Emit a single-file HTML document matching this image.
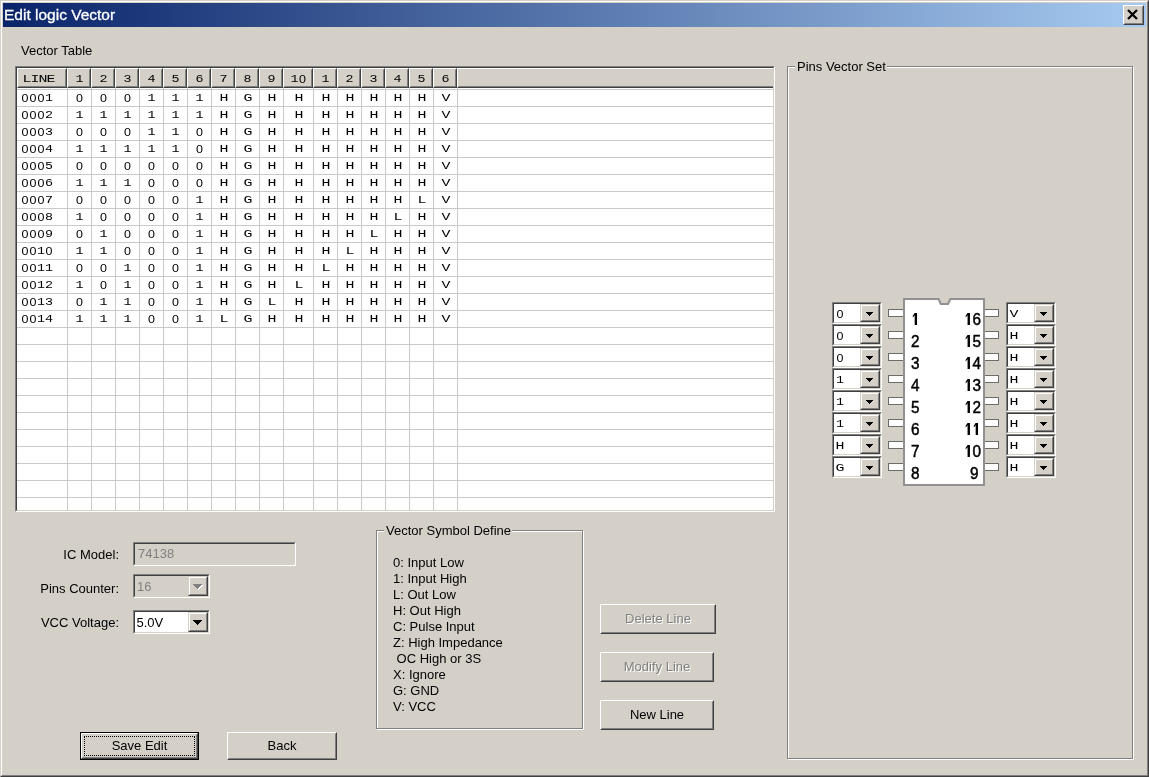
<!DOCTYPE html>
<html><head><meta charset="utf-8"><title>Edit logic Vector</title>
<style>
html,body{margin:0;padding:0}
body{will-change:transform;width:1149px;height:777px;overflow:hidden;background:#d4d0c8;position:relative;
 font-family:"Liberation Sans",sans-serif;font-size:13px;color:#000;line-height:16px}
div,span{position:absolute;box-sizing:border-box;white-space:nowrap}
.t{font-family:"Liberation Sans",sans-serif}
.m{font-family:"Liberation Mono",monospace;font-size:13.33px}
/* window frame */
#w1{left:0;top:0;width:1149px;height:777px;border:1px solid;border-color:#d4d0c8 #404040 #404040 #d4d0c8}
#w2{left:1px;top:1px;width:1147px;height:775px;border:1px solid;border-color:#fff #808080 #808080 #fff}
#title{left:3px;top:3px;width:1143px;height:24px;background:linear-gradient(to right,#0a246a 0%,#a6caf0 100%)}
#title span{left:1px;top:0;height:24px;line-height:24px;color:#fff;font-size:15.5px;-webkit-text-stroke:.3px #fff}
#close{left:1123px;top:5px;width:21px;height:20px;background:#d4d0c8;border:1px solid;border-color:#fff #404040 #404040 #fff}
#close i{position:absolute;left:0;top:0;right:0;bottom:0;border:1px solid;border-color:#d4d0c8 #808080 #808080 #d4d0c8}
/* table */
#tb{left:15px;top:66px;width:760px;height:446px;border:1px solid;border-color:#808080 #fff #fff #808080}
#tb2{left:16px;top:67px;width:758px;height:444px;border:1px solid;border-color:#404040 #d4d0c8 #d4d0c8 #404040;background:#fff}
.h{top:68px;height:20px;background:#d4d0c8;border:1px solid;border-color:#fff #404040 #404040 #fff;text-align:center;line-height:15px}
.h i{position:absolute;left:0;top:0;right:0;bottom:0;border:1px solid;border-color:#d4d0c8 #808080 #808080 #d4d0c8}
.h b{position:absolute;left:0;right:0;top:1px;font-weight:normal;font-style:normal}
.vl{top:88px;width:1px;height:422px;background:#cbc9c5}
.hl{left:17px;width:756px;height:1px;background:#cbc9c5}
.g{width:10px;height:16px;line-height:16px;text-align:center;transform:scale(1.12,.88)}
.w{line-height:0;font-size:0}
.w i{display:inline-block;vertical-align:top;width:8px;height:16px;line-height:16px;text-align:center;font-style:normal;transform:scale(1.12,.88)}
.w i.m{font-size:13.33px}
.w i.d,.d{transform:scale(1,.88)}
.z{font-family:"Liberation Sans",sans-serif;font-size:12.5px}
.sk{border:1px solid;border-color:#808080 #fff #fff #808080}
.sk2{border:1px solid;border-color:#404040 #d4d0c8 #d4d0c8 #404040}
.rb{background:#d4d0c8;border:1px solid;border-color:#d4d0c8 #404040 #404040 #d4d0c8}
.rb i{position:absolute;left:0;top:0;right:0;bottom:0;border:1px solid;border-color:#fff #808080 #808080 #fff}
.bt{background:#d4d0c8;border:1px solid;border-color:#fff #404040 #404040 #fff}
.bt i{position:absolute;left:0;top:0;right:0;bottom:0;border:1px solid;border-color:#d4d0c8 #808080 #808080 #d4d0c8}
.bl{text-align:center}
.rl{text-align:right}
.pin{height:8px;background:#fff;border:1px solid #6c6c6a}
.pn svg{position:static;vertical-align:baseline}
.pn{font-size:17px;line-height:16px;transform:scaleX(.9);-webkit-text-stroke:.5px #000}
</style></head>
<body>
<div id="w1"></div><div id="w2"></div>
<div id="title"><span>Edit logic Vector</span></div>
<div id="close"><i></i><svg style="position:absolute;left:3px;top:3px" width="12" height="12" viewBox="0 0 12 12"><path d="M1 1 L10 10 M10 1 L1 10" stroke="#000" stroke-width="2.2" fill="none"/></svg></div>
<span style="left:21px;top:43px">Vector Table</span>
<div id="tb"></div><div id="tb2"></div>
<div class="h" style="left:17px;width:50px"><i></i></div>
<div class="h" style="left:67px;width:24px"><i></i></div>
<div class="h" style="left:91px;width:24px"><i></i></div>
<div class="h" style="left:115px;width:24px"><i></i></div>
<div class="h" style="left:139px;width:24px"><i></i></div>
<div class="h" style="left:163px;width:24px"><i></i></div>
<div class="h" style="left:187px;width:24px"><i></i></div>
<div class="h" style="left:211px;width:24px"><i></i></div>
<div class="h" style="left:235px;width:24px"><i></i></div>
<div class="h" style="left:259px;width:24px"><i></i></div>
<div class="h" style="left:283px;width:30px"><i></i></div>
<div class="h" style="left:313px;width:24px"><i></i></div>
<div class="h" style="left:337px;width:24px"><i></i></div>
<div class="h" style="left:361px;width:24px"><i></i></div>
<div class="h" style="left:385px;width:24px"><i></i></div>
<div class="h" style="left:409px;width:24px"><i></i></div>
<div class="h" style="left:433px;width:24px"><i></i></div>
<div style="left:457px;top:68px;width:316px;height:20px;overflow:hidden"><div class="h" style="left:0;top:0;width:330px"><i></i></div></div>
<span class="w" style="left:23px;top:70.66px"><i class="m">L</i><i class="m">I</i><i class="m">N</i><i class="m">E</i></span>
<span class="g m d" style="left:74.5px;top:70.66px">1</span>
<span class="g m d" style="left:98.5px;top:70.66px">2</span>
<span class="g m d" style="left:122.5px;top:70.66px">3</span>
<span class="g m d" style="left:146.5px;top:70.66px">4</span>
<span class="g m d" style="left:170.5px;top:70.66px">5</span>
<span class="g m d" style="left:194.5px;top:70.66px">6</span>
<span class="g m d" style="left:218.5px;top:70.66px">7</span>
<span class="g m d" style="left:242.5px;top:70.66px">8</span>
<span class="g m d" style="left:266.5px;top:70.66px">9</span>
<span class="w" style="left:290.5px;top:70.66px"><i class="m d">1</i><i class="z d">0</i></span>
<span class="g m d" style="left:320.5px;top:70.66px">1</span>
<span class="g m d" style="left:344.5px;top:70.66px">2</span>
<span class="g m d" style="left:368.5px;top:70.66px">3</span>
<span class="g m d" style="left:392.5px;top:70.66px">4</span>
<span class="g m d" style="left:416.5px;top:70.66px">5</span>
<span class="g m d" style="left:440.5px;top:70.66px">6</span>
<div class="vl" style="left:67px"></div>
<div class="vl" style="left:91px"></div>
<div class="vl" style="left:115px"></div>
<div class="vl" style="left:139px"></div>
<div class="vl" style="left:163px"></div>
<div class="vl" style="left:187px"></div>
<div class="vl" style="left:211px"></div>
<div class="vl" style="left:235px"></div>
<div class="vl" style="left:259px"></div>
<div class="vl" style="left:283px"></div>
<div class="vl" style="left:313px"></div>
<div class="vl" style="left:337px"></div>
<div class="vl" style="left:361px"></div>
<div class="vl" style="left:385px"></div>
<div class="vl" style="left:409px"></div>
<div class="vl" style="left:433px"></div>
<div class="vl" style="left:457px"></div>
<div class="hl" style="top:89px"></div>
<div class="hl" style="top:106px"></div>
<div class="hl" style="top:123px"></div>
<div class="hl" style="top:140px"></div>
<div class="hl" style="top:157px"></div>
<div class="hl" style="top:174px"></div>
<div class="hl" style="top:191px"></div>
<div class="hl" style="top:208px"></div>
<div class="hl" style="top:225px"></div>
<div class="hl" style="top:242px"></div>
<div class="hl" style="top:259px"></div>
<div class="hl" style="top:276px"></div>
<div class="hl" style="top:293px"></div>
<div class="hl" style="top:310px"></div>
<div class="hl" style="top:327px"></div>
<div class="hl" style="top:344px"></div>
<div class="hl" style="top:361px"></div>
<div class="hl" style="top:378px"></div>
<div class="hl" style="top:395px"></div>
<div class="hl" style="top:412px"></div>
<div class="hl" style="top:429px"></div>
<div class="hl" style="top:446px"></div>
<div class="hl" style="top:463px"></div>
<div class="hl" style="top:480px"></div>
<div class="hl" style="top:497px"></div>
<span class="w" style="left:21px;top:90.01px"><i class="z d">0</i><i class="z d">0</i><i class="z d">0</i><i class="m d">1</i></span>
<span class="g z d" style="left:74.5px;top:90.01px">0</span>
<span class="g z d" style="left:98.5px;top:90.01px">0</span>
<span class="g z d" style="left:122.5px;top:90.01px">0</span>
<span class="g m d" style="left:146.5px;top:90.01px">1</span>
<span class="g m d" style="left:170.5px;top:90.01px">1</span>
<span class="g m d" style="left:194.5px;top:90.01px">1</span>
<span class="g m" style="left:218.5px;top:90.01px">H</span>
<span class="g m" style="left:242.5px;top:90.01px">G</span>
<span class="g m" style="left:266.5px;top:90.01px">H</span>
<span class="g m" style="left:293.5px;top:90.01px">H</span>
<span class="g m" style="left:320.5px;top:90.01px">H</span>
<span class="g m" style="left:344.5px;top:90.01px">H</span>
<span class="g m" style="left:368.5px;top:90.01px">H</span>
<span class="g m" style="left:392.5px;top:90.01px">H</span>
<span class="g m" style="left:416.5px;top:90.01px">H</span>
<span class="g m" style="left:440.5px;top:90.01px">V</span>
<span class="w" style="left:21px;top:107.01px"><i class="z d">0</i><i class="z d">0</i><i class="z d">0</i><i class="m d">2</i></span>
<span class="g m d" style="left:74.5px;top:107.01px">1</span>
<span class="g m d" style="left:98.5px;top:107.01px">1</span>
<span class="g m d" style="left:122.5px;top:107.01px">1</span>
<span class="g m d" style="left:146.5px;top:107.01px">1</span>
<span class="g m d" style="left:170.5px;top:107.01px">1</span>
<span class="g m d" style="left:194.5px;top:107.01px">1</span>
<span class="g m" style="left:218.5px;top:107.01px">H</span>
<span class="g m" style="left:242.5px;top:107.01px">G</span>
<span class="g m" style="left:266.5px;top:107.01px">H</span>
<span class="g m" style="left:293.5px;top:107.01px">H</span>
<span class="g m" style="left:320.5px;top:107.01px">H</span>
<span class="g m" style="left:344.5px;top:107.01px">H</span>
<span class="g m" style="left:368.5px;top:107.01px">H</span>
<span class="g m" style="left:392.5px;top:107.01px">H</span>
<span class="g m" style="left:416.5px;top:107.01px">H</span>
<span class="g m" style="left:440.5px;top:107.01px">V</span>
<span class="w" style="left:21px;top:124.01px"><i class="z d">0</i><i class="z d">0</i><i class="z d">0</i><i class="m d">3</i></span>
<span class="g z d" style="left:74.5px;top:124.01px">0</span>
<span class="g z d" style="left:98.5px;top:124.01px">0</span>
<span class="g z d" style="left:122.5px;top:124.01px">0</span>
<span class="g m d" style="left:146.5px;top:124.01px">1</span>
<span class="g m d" style="left:170.5px;top:124.01px">1</span>
<span class="g z d" style="left:194.5px;top:124.01px">0</span>
<span class="g m" style="left:218.5px;top:124.01px">H</span>
<span class="g m" style="left:242.5px;top:124.01px">G</span>
<span class="g m" style="left:266.5px;top:124.01px">H</span>
<span class="g m" style="left:293.5px;top:124.01px">H</span>
<span class="g m" style="left:320.5px;top:124.01px">H</span>
<span class="g m" style="left:344.5px;top:124.01px">H</span>
<span class="g m" style="left:368.5px;top:124.01px">H</span>
<span class="g m" style="left:392.5px;top:124.01px">H</span>
<span class="g m" style="left:416.5px;top:124.01px">H</span>
<span class="g m" style="left:440.5px;top:124.01px">V</span>
<span class="w" style="left:21px;top:141.01px"><i class="z d">0</i><i class="z d">0</i><i class="z d">0</i><i class="m d">4</i></span>
<span class="g m d" style="left:74.5px;top:141.01px">1</span>
<span class="g m d" style="left:98.5px;top:141.01px">1</span>
<span class="g m d" style="left:122.5px;top:141.01px">1</span>
<span class="g m d" style="left:146.5px;top:141.01px">1</span>
<span class="g m d" style="left:170.5px;top:141.01px">1</span>
<span class="g z d" style="left:194.5px;top:141.01px">0</span>
<span class="g m" style="left:218.5px;top:141.01px">H</span>
<span class="g m" style="left:242.5px;top:141.01px">G</span>
<span class="g m" style="left:266.5px;top:141.01px">H</span>
<span class="g m" style="left:293.5px;top:141.01px">H</span>
<span class="g m" style="left:320.5px;top:141.01px">H</span>
<span class="g m" style="left:344.5px;top:141.01px">H</span>
<span class="g m" style="left:368.5px;top:141.01px">H</span>
<span class="g m" style="left:392.5px;top:141.01px">H</span>
<span class="g m" style="left:416.5px;top:141.01px">H</span>
<span class="g m" style="left:440.5px;top:141.01px">V</span>
<span class="w" style="left:21px;top:158.01px"><i class="z d">0</i><i class="z d">0</i><i class="z d">0</i><i class="m d">5</i></span>
<span class="g z d" style="left:74.5px;top:158.01px">0</span>
<span class="g z d" style="left:98.5px;top:158.01px">0</span>
<span class="g z d" style="left:122.5px;top:158.01px">0</span>
<span class="g z d" style="left:146.5px;top:158.01px">0</span>
<span class="g z d" style="left:170.5px;top:158.01px">0</span>
<span class="g z d" style="left:194.5px;top:158.01px">0</span>
<span class="g m" style="left:218.5px;top:158.01px">H</span>
<span class="g m" style="left:242.5px;top:158.01px">G</span>
<span class="g m" style="left:266.5px;top:158.01px">H</span>
<span class="g m" style="left:293.5px;top:158.01px">H</span>
<span class="g m" style="left:320.5px;top:158.01px">H</span>
<span class="g m" style="left:344.5px;top:158.01px">H</span>
<span class="g m" style="left:368.5px;top:158.01px">H</span>
<span class="g m" style="left:392.5px;top:158.01px">H</span>
<span class="g m" style="left:416.5px;top:158.01px">H</span>
<span class="g m" style="left:440.5px;top:158.01px">V</span>
<span class="w" style="left:21px;top:175.01px"><i class="z d">0</i><i class="z d">0</i><i class="z d">0</i><i class="m d">6</i></span>
<span class="g m d" style="left:74.5px;top:175.01px">1</span>
<span class="g m d" style="left:98.5px;top:175.01px">1</span>
<span class="g m d" style="left:122.5px;top:175.01px">1</span>
<span class="g z d" style="left:146.5px;top:175.01px">0</span>
<span class="g z d" style="left:170.5px;top:175.01px">0</span>
<span class="g z d" style="left:194.5px;top:175.01px">0</span>
<span class="g m" style="left:218.5px;top:175.01px">H</span>
<span class="g m" style="left:242.5px;top:175.01px">G</span>
<span class="g m" style="left:266.5px;top:175.01px">H</span>
<span class="g m" style="left:293.5px;top:175.01px">H</span>
<span class="g m" style="left:320.5px;top:175.01px">H</span>
<span class="g m" style="left:344.5px;top:175.01px">H</span>
<span class="g m" style="left:368.5px;top:175.01px">H</span>
<span class="g m" style="left:392.5px;top:175.01px">H</span>
<span class="g m" style="left:416.5px;top:175.01px">H</span>
<span class="g m" style="left:440.5px;top:175.01px">V</span>
<span class="w" style="left:21px;top:192.01px"><i class="z d">0</i><i class="z d">0</i><i class="z d">0</i><i class="m d">7</i></span>
<span class="g z d" style="left:74.5px;top:192.01px">0</span>
<span class="g z d" style="left:98.5px;top:192.01px">0</span>
<span class="g z d" style="left:122.5px;top:192.01px">0</span>
<span class="g z d" style="left:146.5px;top:192.01px">0</span>
<span class="g z d" style="left:170.5px;top:192.01px">0</span>
<span class="g m d" style="left:194.5px;top:192.01px">1</span>
<span class="g m" style="left:218.5px;top:192.01px">H</span>
<span class="g m" style="left:242.5px;top:192.01px">G</span>
<span class="g m" style="left:266.5px;top:192.01px">H</span>
<span class="g m" style="left:293.5px;top:192.01px">H</span>
<span class="g m" style="left:320.5px;top:192.01px">H</span>
<span class="g m" style="left:344.5px;top:192.01px">H</span>
<span class="g m" style="left:368.5px;top:192.01px">H</span>
<span class="g m" style="left:392.5px;top:192.01px">H</span>
<span class="g m" style="left:416.5px;top:192.01px">L</span>
<span class="g m" style="left:440.5px;top:192.01px">V</span>
<span class="w" style="left:21px;top:209.01px"><i class="z d">0</i><i class="z d">0</i><i class="z d">0</i><i class="m d">8</i></span>
<span class="g m d" style="left:74.5px;top:209.01px">1</span>
<span class="g z d" style="left:98.5px;top:209.01px">0</span>
<span class="g z d" style="left:122.5px;top:209.01px">0</span>
<span class="g z d" style="left:146.5px;top:209.01px">0</span>
<span class="g z d" style="left:170.5px;top:209.01px">0</span>
<span class="g m d" style="left:194.5px;top:209.01px">1</span>
<span class="g m" style="left:218.5px;top:209.01px">H</span>
<span class="g m" style="left:242.5px;top:209.01px">G</span>
<span class="g m" style="left:266.5px;top:209.01px">H</span>
<span class="g m" style="left:293.5px;top:209.01px">H</span>
<span class="g m" style="left:320.5px;top:209.01px">H</span>
<span class="g m" style="left:344.5px;top:209.01px">H</span>
<span class="g m" style="left:368.5px;top:209.01px">H</span>
<span class="g m" style="left:392.5px;top:209.01px">L</span>
<span class="g m" style="left:416.5px;top:209.01px">H</span>
<span class="g m" style="left:440.5px;top:209.01px">V</span>
<span class="w" style="left:21px;top:226.01px"><i class="z d">0</i><i class="z d">0</i><i class="z d">0</i><i class="m d">9</i></span>
<span class="g z d" style="left:74.5px;top:226.01px">0</span>
<span class="g m d" style="left:98.5px;top:226.01px">1</span>
<span class="g z d" style="left:122.5px;top:226.01px">0</span>
<span class="g z d" style="left:146.5px;top:226.01px">0</span>
<span class="g z d" style="left:170.5px;top:226.01px">0</span>
<span class="g m d" style="left:194.5px;top:226.01px">1</span>
<span class="g m" style="left:218.5px;top:226.01px">H</span>
<span class="g m" style="left:242.5px;top:226.01px">G</span>
<span class="g m" style="left:266.5px;top:226.01px">H</span>
<span class="g m" style="left:293.5px;top:226.01px">H</span>
<span class="g m" style="left:320.5px;top:226.01px">H</span>
<span class="g m" style="left:344.5px;top:226.01px">H</span>
<span class="g m" style="left:368.5px;top:226.01px">L</span>
<span class="g m" style="left:392.5px;top:226.01px">H</span>
<span class="g m" style="left:416.5px;top:226.01px">H</span>
<span class="g m" style="left:440.5px;top:226.01px">V</span>
<span class="w" style="left:21px;top:243.01px"><i class="z d">0</i><i class="z d">0</i><i class="m d">1</i><i class="z d">0</i></span>
<span class="g m d" style="left:74.5px;top:243.01px">1</span>
<span class="g m d" style="left:98.5px;top:243.01px">1</span>
<span class="g z d" style="left:122.5px;top:243.01px">0</span>
<span class="g z d" style="left:146.5px;top:243.01px">0</span>
<span class="g z d" style="left:170.5px;top:243.01px">0</span>
<span class="g m d" style="left:194.5px;top:243.01px">1</span>
<span class="g m" style="left:218.5px;top:243.01px">H</span>
<span class="g m" style="left:242.5px;top:243.01px">G</span>
<span class="g m" style="left:266.5px;top:243.01px">H</span>
<span class="g m" style="left:293.5px;top:243.01px">H</span>
<span class="g m" style="left:320.5px;top:243.01px">H</span>
<span class="g m" style="left:344.5px;top:243.01px">L</span>
<span class="g m" style="left:368.5px;top:243.01px">H</span>
<span class="g m" style="left:392.5px;top:243.01px">H</span>
<span class="g m" style="left:416.5px;top:243.01px">H</span>
<span class="g m" style="left:440.5px;top:243.01px">V</span>
<span class="w" style="left:21px;top:260.01px"><i class="z d">0</i><i class="z d">0</i><i class="m d">1</i><i class="m d">1</i></span>
<span class="g z d" style="left:74.5px;top:260.01px">0</span>
<span class="g z d" style="left:98.5px;top:260.01px">0</span>
<span class="g m d" style="left:122.5px;top:260.01px">1</span>
<span class="g z d" style="left:146.5px;top:260.01px">0</span>
<span class="g z d" style="left:170.5px;top:260.01px">0</span>
<span class="g m d" style="left:194.5px;top:260.01px">1</span>
<span class="g m" style="left:218.5px;top:260.01px">H</span>
<span class="g m" style="left:242.5px;top:260.01px">G</span>
<span class="g m" style="left:266.5px;top:260.01px">H</span>
<span class="g m" style="left:293.5px;top:260.01px">H</span>
<span class="g m" style="left:320.5px;top:260.01px">L</span>
<span class="g m" style="left:344.5px;top:260.01px">H</span>
<span class="g m" style="left:368.5px;top:260.01px">H</span>
<span class="g m" style="left:392.5px;top:260.01px">H</span>
<span class="g m" style="left:416.5px;top:260.01px">H</span>
<span class="g m" style="left:440.5px;top:260.01px">V</span>
<span class="w" style="left:21px;top:277.01px"><i class="z d">0</i><i class="z d">0</i><i class="m d">1</i><i class="m d">2</i></span>
<span class="g m d" style="left:74.5px;top:277.01px">1</span>
<span class="g z d" style="left:98.5px;top:277.01px">0</span>
<span class="g m d" style="left:122.5px;top:277.01px">1</span>
<span class="g z d" style="left:146.5px;top:277.01px">0</span>
<span class="g z d" style="left:170.5px;top:277.01px">0</span>
<span class="g m d" style="left:194.5px;top:277.01px">1</span>
<span class="g m" style="left:218.5px;top:277.01px">H</span>
<span class="g m" style="left:242.5px;top:277.01px">G</span>
<span class="g m" style="left:266.5px;top:277.01px">H</span>
<span class="g m" style="left:293.5px;top:277.01px">L</span>
<span class="g m" style="left:320.5px;top:277.01px">H</span>
<span class="g m" style="left:344.5px;top:277.01px">H</span>
<span class="g m" style="left:368.5px;top:277.01px">H</span>
<span class="g m" style="left:392.5px;top:277.01px">H</span>
<span class="g m" style="left:416.5px;top:277.01px">H</span>
<span class="g m" style="left:440.5px;top:277.01px">V</span>
<span class="w" style="left:21px;top:294.01px"><i class="z d">0</i><i class="z d">0</i><i class="m d">1</i><i class="m d">3</i></span>
<span class="g z d" style="left:74.5px;top:294.01px">0</span>
<span class="g m d" style="left:98.5px;top:294.01px">1</span>
<span class="g m d" style="left:122.5px;top:294.01px">1</span>
<span class="g z d" style="left:146.5px;top:294.01px">0</span>
<span class="g z d" style="left:170.5px;top:294.01px">0</span>
<span class="g m d" style="left:194.5px;top:294.01px">1</span>
<span class="g m" style="left:218.5px;top:294.01px">H</span>
<span class="g m" style="left:242.5px;top:294.01px">G</span>
<span class="g m" style="left:266.5px;top:294.01px">L</span>
<span class="g m" style="left:293.5px;top:294.01px">H</span>
<span class="g m" style="left:320.5px;top:294.01px">H</span>
<span class="g m" style="left:344.5px;top:294.01px">H</span>
<span class="g m" style="left:368.5px;top:294.01px">H</span>
<span class="g m" style="left:392.5px;top:294.01px">H</span>
<span class="g m" style="left:416.5px;top:294.01px">H</span>
<span class="g m" style="left:440.5px;top:294.01px">V</span>
<span class="w" style="left:21px;top:311.01px"><i class="z d">0</i><i class="z d">0</i><i class="m d">1</i><i class="m d">4</i></span>
<span class="g m d" style="left:74.5px;top:311.01px">1</span>
<span class="g m d" style="left:98.5px;top:311.01px">1</span>
<span class="g m d" style="left:122.5px;top:311.01px">1</span>
<span class="g z d" style="left:146.5px;top:311.01px">0</span>
<span class="g z d" style="left:170.5px;top:311.01px">0</span>
<span class="g m d" style="left:194.5px;top:311.01px">1</span>
<span class="g m" style="left:218.5px;top:311.01px">L</span>
<span class="g m" style="left:242.5px;top:311.01px">G</span>
<span class="g m" style="left:266.5px;top:311.01px">H</span>
<span class="g m" style="left:293.5px;top:311.01px">H</span>
<span class="g m" style="left:320.5px;top:311.01px">H</span>
<span class="g m" style="left:344.5px;top:311.01px">H</span>
<span class="g m" style="left:368.5px;top:311.01px">H</span>
<span class="g m" style="left:392.5px;top:311.01px">H</span>
<span class="g m" style="left:416.5px;top:311.01px">H</span>
<span class="g m" style="left:440.5px;top:311.01px">V</span>
<span class="rl" style="left:0;width:119px;top:547px">IC Model:</span>
<span class="rl" style="left:0;width:119px;top:581px">Pins Counter:</span>
<span class="rl" style="left:0;width:119px;top:615px">VCC Voltage:</span>
<div class="sk" style="left:133px;top:542px;width:163px;height:24px"></div>
<div class="sk2" style="left:134px;top:543px;width:161px;height:22px;background:#d4d0c8"></div>
<span style="left:138px;top:546px;color:#808080">74138</span>
<div class="sk" style="left:133px;top:574px;width:77px;height:24px"></div>
<div class="sk2" style="left:134px;top:575px;width:75px;height:22px;background:#d4d0c8"></div>
<span class="t" style="left:137px;top:577px;height:20px;line-height:20px;color:#808080">16</span>
<div class="rb" style="left:188px;top:576px;width:20px;height:20px"><i></i></div>
<svg style="position:absolute;left:194px;top:585px" width="9" height="5" fill="#fff"><rect x="0" y="0" width="9" height="1"/><rect x="1" y="1" width="7" height="1"/><rect x="2" y="2" width="5" height="1"/><rect x="3" y="3" width="3" height="1"/><rect x="4" y="4" width="1" height="1"/></svg>
<svg style="position:absolute;left:193px;top:584px" width="9" height="5" fill="#808080"><rect x="0" y="0" width="9" height="1"/><rect x="1" y="1" width="7" height="1"/><rect x="2" y="2" width="5" height="1"/><rect x="3" y="3" width="3" height="1"/><rect x="4" y="4" width="1" height="1"/></svg>
<div class="sk" style="left:133px;top:610px;width:77px;height:24px"></div>
<div class="sk2" style="left:134px;top:611px;width:75px;height:22px;background:#fff"></div>
<span class="t" style="left:136.5px;top:613px;height:20px;line-height:20px;color:#000">5.0V</span>
<div class="rb" style="left:188px;top:612px;width:20px;height:20px"><i></i></div>
<svg style="position:absolute;left:193px;top:620px" width="9" height="5" fill="#000"><rect x="0" y="0" width="9" height="1"/><rect x="1" y="1" width="7" height="1"/><rect x="2" y="2" width="5" height="1"/><rect x="3" y="3" width="3" height="1"/><rect x="4" y="4" width="1" height="1"/></svg>
<div style="left:80px;top:732px;width:119px;height:28px;border:1px solid #000"></div>
<div class="bt" style="left:81px;top:733px;width:117px;height:26px"><i></i></div>
<div style="left:84px;top:736px;width:111px;height:20px;border:1px dotted #000"></div>
<span class="bl" style="left:80px;top:732px;width:119px;height:28px;line-height:28px">Save Edit</span>
<div class="bt" style="left:227px;top:732px;width:110px;height:28px"><i></i></div>
<span class="bl" style="left:227px;top:732px;width:110px;height:28px;line-height:28px">Back</span>
<div class="bt" style="left:600px;top:604px;width:116px;height:30px"><i></i></div>
<span class="bl" style="left:601px;top:605px;width:116px;height:30px;line-height:30px;color:#fff">Delete Line</span>
<span class="bl" style="left:600px;top:604px;width:116px;height:30px;line-height:30px;color:#808080">Delete Line</span>
<div class="bt" style="left:600px;top:652px;width:114px;height:30px"><i></i></div>
<span class="bl" style="left:601px;top:653px;width:114px;height:30px;line-height:30px;color:#fff">Modify Line</span>
<span class="bl" style="left:600px;top:652px;width:114px;height:30px;line-height:30px;color:#808080">Modify Line</span>
<div class="bt" style="left:600px;top:700px;width:114px;height:30px"><i></i></div>
<span class="bl" style="left:600px;top:700px;width:114px;height:30px;line-height:30px">New Line</span>
<div style="left:377px;top:531px;width:207px;height:199px;border:1px solid #fff"></div>
<div style="left:376px;top:530px;width:207px;height:199px;border:1px solid #808080"></div>
<div style="left:384px;top:529px;width:128px;height:4px;background:#d4d0c8"></div>
<span style="left:386px;top:523px">Vector Symbol Define</span>
<span style="left:393px;top:555px;color:#000">0: Input Low</span>
<span style="left:393px;top:571px;color:#000">1: Input High</span>
<span style="left:393px;top:587px;color:#000">L: Out Low</span>
<span style="left:393px;top:603px;color:#000">H: Out High</span>
<span style="left:393px;top:619px;color:#000">C: Pulse Input</span>
<span style="left:393px;top:635px;color:#000">Z: High Impedance</span>
<span style="left:393px;top:651px;color:#000">&nbsp;OC High or 3S</span>
<span style="left:393px;top:667px;color:#000">X: Ignore</span>
<span style="left:393px;top:683px;color:#000">G: GND</span>
<span style="left:393px;top:699px;color:#000">V: VCC</span>
<div style="left:788px;top:67px;width:346px;height:693px;border:1px solid #fff"></div>
<div style="left:787px;top:66px;width:346px;height:693px;border:1px solid #808080"></div>
<div style="left:795px;top:65px;width:92px;height:4px;background:#d4d0c8"></div>
<span style="left:797px;top:59px">Pins Vector Set</span>
<div class="pin" style="left:888px;top:309px;width:16px"></div>
<div class="pin" style="left:984px;top:309px;width:15px"></div>
<div class="pin" style="left:888px;top:331px;width:16px"></div>
<div class="pin" style="left:984px;top:331px;width:15px"></div>
<div class="pin" style="left:888px;top:353px;width:16px"></div>
<div class="pin" style="left:984px;top:353px;width:15px"></div>
<div class="pin" style="left:888px;top:375px;width:16px"></div>
<div class="pin" style="left:984px;top:375px;width:15px"></div>
<div class="pin" style="left:888px;top:397px;width:16px"></div>
<div class="pin" style="left:984px;top:397px;width:15px"></div>
<div class="pin" style="left:888px;top:419px;width:16px"></div>
<div class="pin" style="left:984px;top:419px;width:15px"></div>
<div class="pin" style="left:888px;top:441px;width:16px"></div>
<div class="pin" style="left:984px;top:441px;width:15px"></div>
<div class="pin" style="left:888px;top:463px;width:16px"></div>
<div class="pin" style="left:984px;top:463px;width:15px"></div>
<svg style="position:absolute;left:903px;top:298px" width="83" height="189" viewBox="0 0 83 189"><path d="M1 1 H35.5 L37.8 6 H45 L47.3 1 H81 V187 H1 Z" fill="#fff" stroke="#909090" stroke-width="2"/></svg>
<div class="sk" style="left:832px;top:302px;width:50px;height:22px"></div>
<div class="sk2" style="left:833px;top:303px;width:48px;height:20px;background:#fff"></div>
<span class="g z d" style="left:835px;top:306.26px">0</span>
<div class="rb" style="left:860px;top:304px;width:20px;height:18px"><i></i></div>
<svg style="position:absolute;left:866px;top:312px" width="7" height="4" fill="#000"><rect x="0" y="0" width="7" height="1"/><rect x="1" y="1" width="5" height="1"/><rect x="2" y="2" width="3" height="1"/><rect x="3" y="3" width="1" height="1"/></svg>
<div class="sk" style="left:1006px;top:302px;width:50px;height:22px"></div>
<div class="sk2" style="left:1007px;top:303px;width:48px;height:20px;background:#fff"></div>
<span class="g m" style="left:1009px;top:306.26px">V</span>
<div class="rb" style="left:1034px;top:304px;width:20px;height:18px"><i></i></div>
<svg style="position:absolute;left:1040px;top:312px" width="7" height="4" fill="#000"><rect x="0" y="0" width="7" height="1"/><rect x="1" y="1" width="5" height="1"/><rect x="2" y="2" width="3" height="1"/><rect x="3" y="3" width="1" height="1"/></svg>
<span class="pn" style="left:911.3px;top:312px;transform-origin:0 0"><svg width="9.45" height="12.2" viewBox="0 0 9.45 12.2"><path d="M4.1 0 H6.74 V12.2 H4.1 V2.3 L2 4.6 V2.7 Z"/></svg></span>
<span class="pn" style="right:168.4px;top:312px;transform-origin:100% 0"><svg width="9.45" height="12.2" viewBox="0 0 9.45 12.2"><path d="M4.1 0 H6.74 V12.2 H4.1 V2.3 L2 4.6 V2.7 Z"/></svg>6</span>
<div class="sk" style="left:832px;top:324px;width:50px;height:22px"></div>
<div class="sk2" style="left:833px;top:325px;width:48px;height:20px;background:#fff"></div>
<span class="g z d" style="left:835px;top:328.26px">0</span>
<div class="rb" style="left:860px;top:326px;width:20px;height:18px"><i></i></div>
<svg style="position:absolute;left:866px;top:334px" width="7" height="4" fill="#000"><rect x="0" y="0" width="7" height="1"/><rect x="1" y="1" width="5" height="1"/><rect x="2" y="2" width="3" height="1"/><rect x="3" y="3" width="1" height="1"/></svg>
<div class="sk" style="left:1006px;top:324px;width:50px;height:22px"></div>
<div class="sk2" style="left:1007px;top:325px;width:48px;height:20px;background:#fff"></div>
<span class="g m" style="left:1009px;top:328.26px">H</span>
<div class="rb" style="left:1034px;top:326px;width:20px;height:18px"><i></i></div>
<svg style="position:absolute;left:1040px;top:334px" width="7" height="4" fill="#000"><rect x="0" y="0" width="7" height="1"/><rect x="1" y="1" width="5" height="1"/><rect x="2" y="2" width="3" height="1"/><rect x="3" y="3" width="1" height="1"/></svg>
<span class="pn" style="left:911.3px;top:334px;transform-origin:0 0">2</span>
<span class="pn" style="right:168.4px;top:334px;transform-origin:100% 0"><svg width="9.45" height="12.2" viewBox="0 0 9.45 12.2"><path d="M4.1 0 H6.74 V12.2 H4.1 V2.3 L2 4.6 V2.7 Z"/></svg>5</span>
<div class="sk" style="left:832px;top:346px;width:50px;height:22px"></div>
<div class="sk2" style="left:833px;top:347px;width:48px;height:20px;background:#fff"></div>
<span class="g z d" style="left:835px;top:350.26px">0</span>
<div class="rb" style="left:860px;top:348px;width:20px;height:18px"><i></i></div>
<svg style="position:absolute;left:866px;top:356px" width="7" height="4" fill="#000"><rect x="0" y="0" width="7" height="1"/><rect x="1" y="1" width="5" height="1"/><rect x="2" y="2" width="3" height="1"/><rect x="3" y="3" width="1" height="1"/></svg>
<div class="sk" style="left:1006px;top:346px;width:50px;height:22px"></div>
<div class="sk2" style="left:1007px;top:347px;width:48px;height:20px;background:#fff"></div>
<span class="g m" style="left:1009px;top:350.26px">H</span>
<div class="rb" style="left:1034px;top:348px;width:20px;height:18px"><i></i></div>
<svg style="position:absolute;left:1040px;top:356px" width="7" height="4" fill="#000"><rect x="0" y="0" width="7" height="1"/><rect x="1" y="1" width="5" height="1"/><rect x="2" y="2" width="3" height="1"/><rect x="3" y="3" width="1" height="1"/></svg>
<span class="pn" style="left:911.3px;top:356px;transform-origin:0 0">3</span>
<span class="pn" style="right:168.4px;top:356px;transform-origin:100% 0"><svg width="9.45" height="12.2" viewBox="0 0 9.45 12.2"><path d="M4.1 0 H6.74 V12.2 H4.1 V2.3 L2 4.6 V2.7 Z"/></svg>4</span>
<div class="sk" style="left:832px;top:368px;width:50px;height:22px"></div>
<div class="sk2" style="left:833px;top:369px;width:48px;height:20px;background:#fff"></div>
<span class="g m d" style="left:835px;top:372.26px">1</span>
<div class="rb" style="left:860px;top:370px;width:20px;height:18px"><i></i></div>
<svg style="position:absolute;left:866px;top:378px" width="7" height="4" fill="#000"><rect x="0" y="0" width="7" height="1"/><rect x="1" y="1" width="5" height="1"/><rect x="2" y="2" width="3" height="1"/><rect x="3" y="3" width="1" height="1"/></svg>
<div class="sk" style="left:1006px;top:368px;width:50px;height:22px"></div>
<div class="sk2" style="left:1007px;top:369px;width:48px;height:20px;background:#fff"></div>
<span class="g m" style="left:1009px;top:372.26px">H</span>
<div class="rb" style="left:1034px;top:370px;width:20px;height:18px"><i></i></div>
<svg style="position:absolute;left:1040px;top:378px" width="7" height="4" fill="#000"><rect x="0" y="0" width="7" height="1"/><rect x="1" y="1" width="5" height="1"/><rect x="2" y="2" width="3" height="1"/><rect x="3" y="3" width="1" height="1"/></svg>
<span class="pn" style="left:911.3px;top:378px;transform-origin:0 0">4</span>
<span class="pn" style="right:168.4px;top:378px;transform-origin:100% 0"><svg width="9.45" height="12.2" viewBox="0 0 9.45 12.2"><path d="M4.1 0 H6.74 V12.2 H4.1 V2.3 L2 4.6 V2.7 Z"/></svg>3</span>
<div class="sk" style="left:832px;top:390px;width:50px;height:22px"></div>
<div class="sk2" style="left:833px;top:391px;width:48px;height:20px;background:#fff"></div>
<span class="g m d" style="left:835px;top:394.26px">1</span>
<div class="rb" style="left:860px;top:392px;width:20px;height:18px"><i></i></div>
<svg style="position:absolute;left:866px;top:400px" width="7" height="4" fill="#000"><rect x="0" y="0" width="7" height="1"/><rect x="1" y="1" width="5" height="1"/><rect x="2" y="2" width="3" height="1"/><rect x="3" y="3" width="1" height="1"/></svg>
<div class="sk" style="left:1006px;top:390px;width:50px;height:22px"></div>
<div class="sk2" style="left:1007px;top:391px;width:48px;height:20px;background:#fff"></div>
<span class="g m" style="left:1009px;top:394.26px">H</span>
<div class="rb" style="left:1034px;top:392px;width:20px;height:18px"><i></i></div>
<svg style="position:absolute;left:1040px;top:400px" width="7" height="4" fill="#000"><rect x="0" y="0" width="7" height="1"/><rect x="1" y="1" width="5" height="1"/><rect x="2" y="2" width="3" height="1"/><rect x="3" y="3" width="1" height="1"/></svg>
<span class="pn" style="left:911.3px;top:400px;transform-origin:0 0">5</span>
<span class="pn" style="right:168.4px;top:400px;transform-origin:100% 0"><svg width="9.45" height="12.2" viewBox="0 0 9.45 12.2"><path d="M4.1 0 H6.74 V12.2 H4.1 V2.3 L2 4.6 V2.7 Z"/></svg>2</span>
<div class="sk" style="left:832px;top:412px;width:50px;height:22px"></div>
<div class="sk2" style="left:833px;top:413px;width:48px;height:20px;background:#fff"></div>
<span class="g m d" style="left:835px;top:416.26px">1</span>
<div class="rb" style="left:860px;top:414px;width:20px;height:18px"><i></i></div>
<svg style="position:absolute;left:866px;top:422px" width="7" height="4" fill="#000"><rect x="0" y="0" width="7" height="1"/><rect x="1" y="1" width="5" height="1"/><rect x="2" y="2" width="3" height="1"/><rect x="3" y="3" width="1" height="1"/></svg>
<div class="sk" style="left:1006px;top:412px;width:50px;height:22px"></div>
<div class="sk2" style="left:1007px;top:413px;width:48px;height:20px;background:#fff"></div>
<span class="g m" style="left:1009px;top:416.26px">H</span>
<div class="rb" style="left:1034px;top:414px;width:20px;height:18px"><i></i></div>
<svg style="position:absolute;left:1040px;top:422px" width="7" height="4" fill="#000"><rect x="0" y="0" width="7" height="1"/><rect x="1" y="1" width="5" height="1"/><rect x="2" y="2" width="3" height="1"/><rect x="3" y="3" width="1" height="1"/></svg>
<span class="pn" style="left:911.3px;top:422px;transform-origin:0 0">6</span>
<span class="pn" style="right:168.4px;top:422px;transform-origin:100% 0"><svg width="9.45" height="12.2" viewBox="0 0 9.45 12.2"><path d="M4.1 0 H6.74 V12.2 H4.1 V2.3 L2 4.6 V2.7 Z"/></svg><svg width="9.45" height="12.2" viewBox="0 0 9.45 12.2"><path d="M4.1 0 H6.74 V12.2 H4.1 V2.3 L2 4.6 V2.7 Z"/></svg></span>
<div class="sk" style="left:832px;top:434px;width:50px;height:22px"></div>
<div class="sk2" style="left:833px;top:435px;width:48px;height:20px;background:#fff"></div>
<span class="g m" style="left:835px;top:438.26px">H</span>
<div class="rb" style="left:860px;top:436px;width:20px;height:18px"><i></i></div>
<svg style="position:absolute;left:866px;top:444px" width="7" height="4" fill="#000"><rect x="0" y="0" width="7" height="1"/><rect x="1" y="1" width="5" height="1"/><rect x="2" y="2" width="3" height="1"/><rect x="3" y="3" width="1" height="1"/></svg>
<div class="sk" style="left:1006px;top:434px;width:50px;height:22px"></div>
<div class="sk2" style="left:1007px;top:435px;width:48px;height:20px;background:#fff"></div>
<span class="g m" style="left:1009px;top:438.26px">H</span>
<div class="rb" style="left:1034px;top:436px;width:20px;height:18px"><i></i></div>
<svg style="position:absolute;left:1040px;top:444px" width="7" height="4" fill="#000"><rect x="0" y="0" width="7" height="1"/><rect x="1" y="1" width="5" height="1"/><rect x="2" y="2" width="3" height="1"/><rect x="3" y="3" width="1" height="1"/></svg>
<span class="pn" style="left:911.3px;top:444px;transform-origin:0 0">7</span>
<span class="pn" style="right:168.4px;top:444px;transform-origin:100% 0"><svg width="9.45" height="12.2" viewBox="0 0 9.45 12.2"><path d="M4.1 0 H6.74 V12.2 H4.1 V2.3 L2 4.6 V2.7 Z"/></svg>0</span>
<div class="sk" style="left:832px;top:456px;width:50px;height:22px"></div>
<div class="sk2" style="left:833px;top:457px;width:48px;height:20px;background:#fff"></div>
<span class="g m" style="left:835px;top:460.26px">G</span>
<div class="rb" style="left:860px;top:458px;width:20px;height:18px"><i></i></div>
<svg style="position:absolute;left:866px;top:466px" width="7" height="4" fill="#000"><rect x="0" y="0" width="7" height="1"/><rect x="1" y="1" width="5" height="1"/><rect x="2" y="2" width="3" height="1"/><rect x="3" y="3" width="1" height="1"/></svg>
<div class="sk" style="left:1006px;top:456px;width:50px;height:22px"></div>
<div class="sk2" style="left:1007px;top:457px;width:48px;height:20px;background:#fff"></div>
<span class="g m" style="left:1009px;top:460.26px">H</span>
<div class="rb" style="left:1034px;top:458px;width:20px;height:18px"><i></i></div>
<svg style="position:absolute;left:1040px;top:466px" width="7" height="4" fill="#000"><rect x="0" y="0" width="7" height="1"/><rect x="1" y="1" width="5" height="1"/><rect x="2" y="2" width="3" height="1"/><rect x="3" y="3" width="1" height="1"/></svg>
<span class="pn" style="left:911.3px;top:466px;transform-origin:0 0">8</span>
<span class="pn" style="right:171px;top:466px;transform-origin:100% 0">9</span>
</body></html>
